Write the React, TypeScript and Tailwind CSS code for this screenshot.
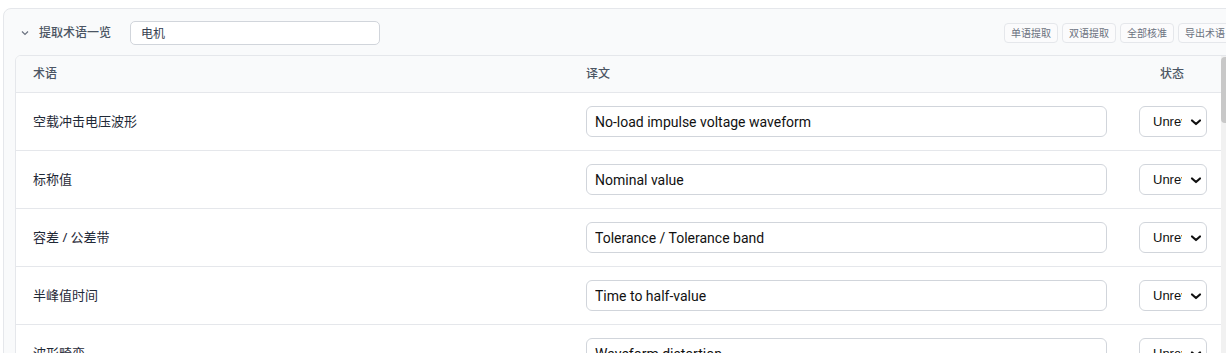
import React from "react"

const rows = [
  { term: "空载冲击电压波形", trans: "No-load impulse voltage waveform" },
  { term: "标称值", trans: "Nominal value" },
  { term: "容差 / 公差带", trans: "Tolerance / Tolerance band" },
  { term: "半峰值时间", trans: "Time to half-value" },
  { term: "波形畸变", trans: "Waveform distortion" },
]

const cjk = "font-['Noto_Sans','Noto_Sans_CJK_SC',sans-serif]"

const StatusSelect = () => (
  <div className="flex h-[31px] w-[68px] items-center rounded-[6px] border border-[#d1d5db] bg-white pl-[13px] pr-[4px]">
    <span className="w-[29px] overflow-hidden whitespace-nowrap font-['Liberation_Sans',sans-serif] text-[13px] text-[#111]">
      Unreviewed
    </span>
    <svg width="12" height="12" viewBox="0 0 12 12" className="ml-auto">
      <path d="M2 4.5l4 3.5 4-3.5" fill="none" stroke="#111" strokeWidth="2.2" strokeLinecap="round" strokeLinejoin="round" />
    </svg>
  </div>
)

const App = () => {
  return (
    <div className={`h-[353px] w-[1226px] overflow-hidden bg-white pl-[3px] pt-2 ${cjk}`}>
      <div className="w-[1242px] rounded-lg border border-[#e5e7eb] bg-[#f9fafb] pb-3 pl-[11px] pr-3 pt-3">
        {/* header */}
        <div className="flex h-6 items-center">
          <svg width="12" height="12" viewBox="0 0 12 12" className="ml-1">
            <path d="M3 4.5l3 3 3-3" fill="none" stroke="#6b7280" strokeWidth="1.2" />
          </svg>
          <span className="ml-[8px] text-[12px] font-medium text-[#4b5563]">提取术语一览</span>
          <input
            defaultValue="电机"
            className="ml-[19px] h-6 w-[250px] rounded-[5px] border border-[#d1d5db] bg-white px-[10px] text-[12px] text-[#374151] outline-none"
          />
          <div className="ml-auto flex gap-1">
            {["单语提取", "双语提取", "全部核准", "导出术语"].map((b) => (
              <button
                key={b}
                className="h-5 w-[54px] rounded-[4px] border border-[#e5e7eb] bg-[#fbfbfc] text-[10px] text-[#6b7280]"
              >
                {b}
              </button>
            ))}
          </div>
        </div>

        {/* table */}
        <div className="mt-[10px] flex overflow-hidden rounded-t-md border border-[#e5e7eb] bg-white">
          <div className="w-[1205px]">
            <div className="grid h-[37px] grid-cols-[554px_553px_98px] items-center border-b border-[#e5e7eb] bg-[#f9fafb] text-[12px] font-medium text-[#4b5563]">
              <div className="pl-[17px]">术语</div>
              <div className="px-4">译文</div>
              <div className="text-center">状态</div>
            </div>
            {rows.map((r) => (
              <div
                key={r.term}
                className="grid h-[58px] grid-cols-[554px_553px_98px] items-center border-b border-[#e5e7eb]"
              >
                <div className="pl-[17px] text-[13px] text-[#1f2937]">{r.term}</div>
                <div className="px-4">
                  <input
                    defaultValue={r.trans}
                    className="h-[31px] w-full rounded-[6px] border border-[#d1d5db] bg-white px-2 font-['Roboto',sans-serif] text-[14px] text-[#111] outline-none"
                  />
                </div>
                <div className="flex justify-center pl-[2px]">
                  <StatusSelect />
                </div>
              </div>
            ))}
          </div>
          <div className="w-[11px] bg-[#f1f1f1] pt-[1px]">
            <div className="h-[66px] w-full rounded-sm bg-[#c8c8c8]" />
          </div>
        </div>
      </div>
    </div>
  )
}

export default App
